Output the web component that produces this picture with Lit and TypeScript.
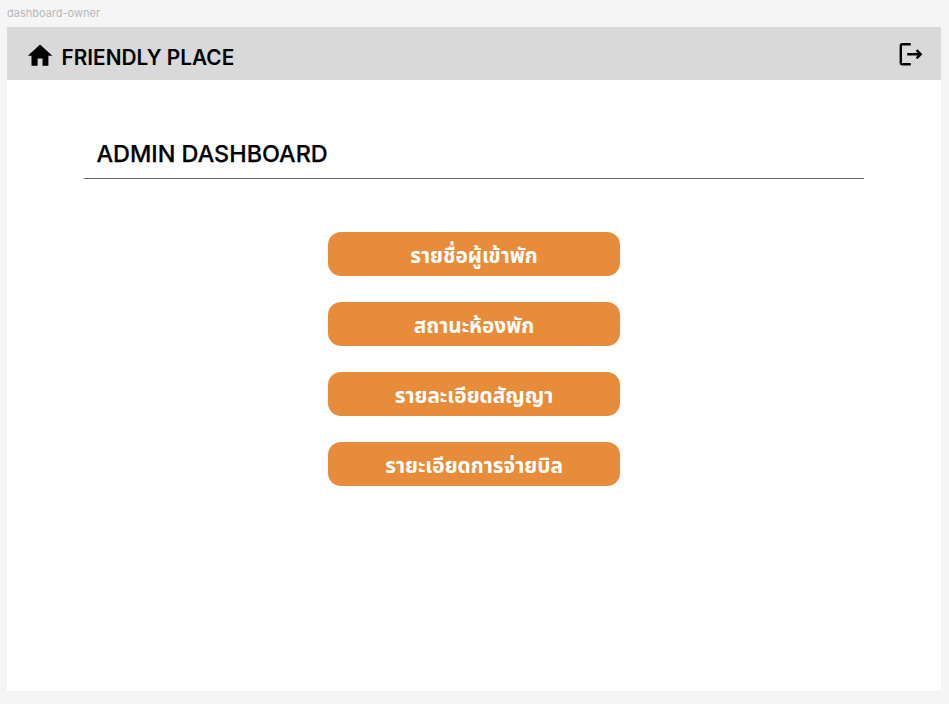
import { LitElement, html, css } from "lit";
import { customElement } from "lit/decorators.js";

@customElement("app-root")
export class AppRoot extends LitElement {
  static styles = css`
    :host {
      display: flex;
      flex-direction: column;
      box-sizing: border-box;
      width: 949px;
      height: 704px;
      padding: 0 8px 13px 7px;
      background: #f5f5f5;
      font-family: Inter, "Noto Sans Thai", "Noto Sans", sans-serif;
      color: #000;
      overflow: hidden;
    }
    .frame-label {
      height: 27px;
      line-height: 27px;
      font-size: 11px;
      color: #b8b8b8;
    }
    .frame {
      flex: 1;
      background: #fff;
    }
    header {
      display: flex;
      align-items: center;
      height: 53px;
      box-sizing: border-box;
      padding: 0 15px 0 18px;
      background: #d9d9d9;
    }
    .home { width: 30px; height: 30px; margin-top: 2px; }
    .brand { flex: 1; margin: 8px 0 0 6.5px; font-size: 20.8px; font-weight: 600; line-height: 26px; white-space: nowrap; }
    .logout { width: 30px; height: 30px; }
    main { padding: 54px 77px 0; }
    h1 {
      margin: 0 0 53px;
      height: 44px;
      padding-left: 12.5px;
      line-height: 40px;
      font-size: 23.4px;
      font-weight: 500;
      -webkit-text-stroke: 0.25px #000;
      border-bottom: 1px solid #666;
    }
    nav { display: flex; flex-direction: column; align-items: center; gap: 26px; }
    button {
      width: 292px;
      height: 44px;
      border: 0;
      border-radius: 13px;
      padding: 4px 0 0;
      background: #e68c3a;
      color: #fff;
      font: 700 20.8px/30px Inter, "Noto Sans Thai", "Noto Sans", sans-serif;
    }
  `;

  render() {
    return html`
      <div class="frame-label">dashboard-owner</div>
      <div class="frame">
        <header>
          <svg class="home" viewBox="0 0 30 30"><path d="M12.6 25.8v-7.2h4.9v7.2h5.9V15.8h3.9L15 4.6 2.9 15.8h3.6v10z" /></svg>
          <div class="brand">FRIENDLY PLACE</div>
          <svg class="logout" viewBox="0 0 30 30" fill="none" stroke="#000" stroke-width="2.4"><path d="M14.8 5.2H6.3Q4.8 5.2 4.8 6.7V23.7Q4.8 25.2 6.3 25.2H14.8M11.2 15.2H25M20.6 11.1L24.7 15.2L20.6 19.3" /></svg>
        </header>
        <main>
          <h1>ADMIN DASHBOARD</h1>
          <nav>
            ${["รายชื่อผู้เข้าพัก", "สถานะห้องพัก", "รายละเอียดสัญญา", "รายะเอียดการจ่ายบิล"].map(
              (label) => html`<button>${label}</button>`
            )}
          </nav>
        </main>
      </div>
    `;
  }
}
